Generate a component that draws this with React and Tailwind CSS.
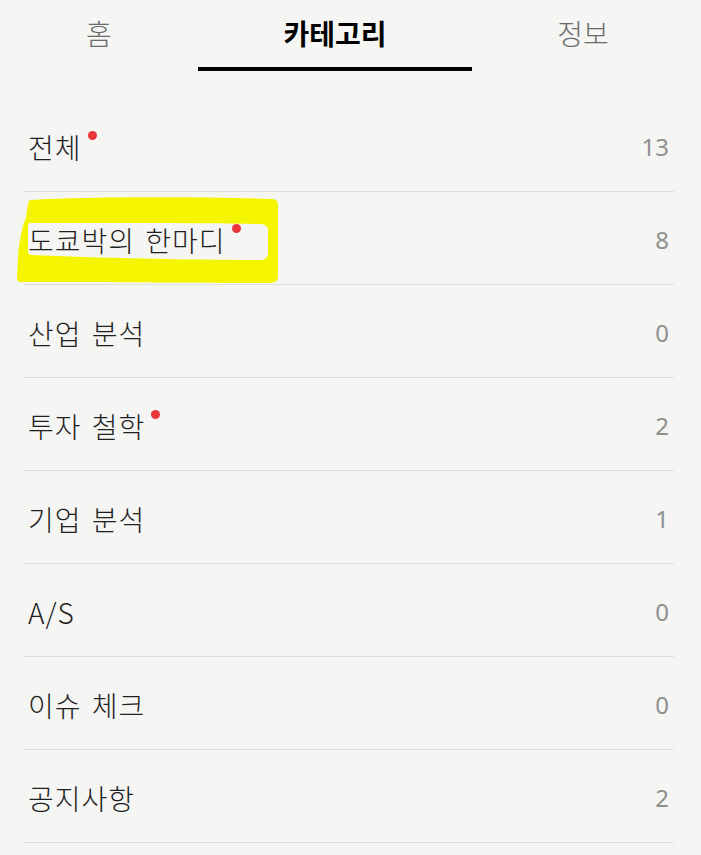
import React from 'react'

const tabs = [
  { label: '홈', w: 'w-[198px]' },
  { label: '카테고리', w: 'w-[274px]', active: true },
  { label: '정보', w: 'w-[222px]' },
]

const categories = [
  { name: '전체', count: 13, dot: true },
  { name: '도쿄박의 한마디', count: 8, dot: true, marked: true },
  { name: '산업 분석', count: 0 },
  { name: '투자 철학', count: 2, dot: true },
  { name: '기업 분석', count: 1 },
  { name: 'A/S', count: 0 },
  { name: '이슈 체크', count: 0 },
  { name: '공지사항', count: 2 },
]

const font = { fontFamily: '"Noto Sans CJK KR", "Noto Sans", sans-serif' }

// yellow marker scribble around a row
function Marker() {
  return (
    <svg
      className="absolute left-[-8px] top-[-2px] pointer-events-none"
      width="266"
      height="100"
      viewBox="0 0 266 100"
    >
      <path
        fillRule="evenodd"
        fill="#f5f500"
        d="M14 10 C80 6 200 7 257 9 C261 10 262 12 262 15 L262 86 C262 91 259 93 254 93 C180 93 80 92 4 92 C2 92 1 90 1 88 L2 68 C3 52 6 36 10 28 C11 18 12 12 14 10 Z
           M14 33 C90 33 180 33 246 34 C250 35 252 37 252 40 L252 63 C252 67 249 70 245 70 C180 70 80 68 16 65 C13 65 12 63 12 61 L12 37 C12 35 13 33 14 33 Z"
      />
    </svg>
  )
}

export default function App() {
  return (
    <div className="min-h-[855px] w-full bg-[#f5f5f3] text-[#1f1f1f]" style={font}>
      <div className="flex h-[71px]">
        {tabs.map((t) => (
          <div key={t.label} className={`${t.w} flex justify-center`}>
            <div
              className={`flex h-full w-full items-center justify-center text-[28px] ${
                t.active ? 'border-b-4 border-black font-bold text-black' : 'pb-[4px] font-light text-[#6b6b6b]'
              }`}
            >
              <span className="-mt-[2px]">{t.label}</span>
            </div>
          </div>
        ))}
      </div>

      <ul className="mt-[28px] ml-6 mr-[27px]">
        {categories.map((c) => (
          <li
            key={c.name}
            className="relative flex h-[93px] items-center justify-between border-b border-[#dedede] pl-1 pr-[5px]"
          >
            {c.marked && <Marker />}
            <div className="relative flex items-start text-[28px] font-light leading-none tracking-[1px] [word-spacing:3px]">
              <span className="mt-[4px]">{c.name}</span>
              {c.dot && <span className="ml-[6px] mt-[2px] h-[9px] w-[9px] rounded-full bg-[#e8363a]" />}
            </div>
            <span className="mt-[4px] text-[24px] text-[#8f8f8f]" style={{ fontFamily: '"Noto Sans", sans-serif' }}>
              {c.count}
            </span>
          </li>
        ))}
      </ul>
    </div>
  )
}
